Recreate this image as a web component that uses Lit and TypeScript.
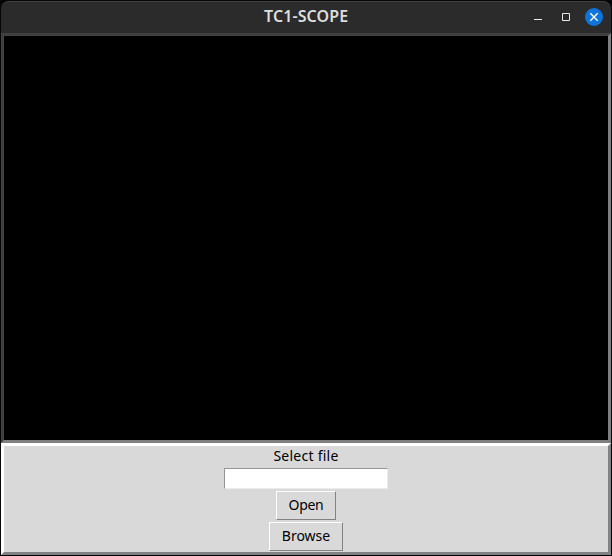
import { LitElement, html, css } from "lit";
import { customElement } from "lit/decorators.js";

@customElement("title-bar")
class TitleBar extends LitElement {
  static styles = css`
    :host {
      display: grid;
      grid-template-columns: 1fr auto 1fr;
      align-items: center;
      height: 32px;
      box-sizing: border-box;
      padding-bottom: 1px;
      border-top: 1px solid #404040;
      border-radius: 8px 8px 0 0;
      background: #2b2b2b;
      color: #dedede;
    }
    .title {
      grid-column: 2;
      box-sizing: border-box;
      width: 84px;
      height: 30px;
      font: 600 16px/28px "Noto Sans", sans-serif;
      letter-spacing: 0.1px;
      white-space: nowrap;
    }
    .controls {
      display: flex;
      justify-content: flex-end;
      align-items: center;
      gap: 10px;
      padding-right: 8px;
    }
    svg {
      display: block;
      width: 18px;
      height: 18px;
    }
  `;

  render() {
    return html`
      <div class="title">TC1-SCOPE</div>
      <div class="controls">
        <svg viewBox="0 0 18 18"><path d="M5 11.5h8" stroke="#e8e8e8" /></svg>
        <svg viewBox="0 0 18 18"><path d="M5.5 5.5h7v7h-7z" fill="none" stroke="#e8e8e8" /></svg>
        <svg viewBox="0 0 18 18">
          <circle cx="9" cy="9" r="9" fill="#0f73dc" />
          <path d="M5.3 5.3l7.4 7.4M12.7 5.3l-7.4 7.4" stroke="#fff" stroke-width="1.4" />
        </svg>
      </div>
    `;
  }
}

@customElement("app-root")
class AppRoot extends LitElement {
  static styles = css`
    :host {
      display: flex;
      flex-direction: column;
      box-sizing: border-box;
      width: 612px;
      height: 556px;
      padding: 1px;
      background: #050608;
      font: 14px/19px "Noto Sans", sans-serif;
      color: #000;
    }
    .scope {
      flex: 1;
      border: 3px solid;
      border-color: #404040 #7f7f7f #7f7f7f #404040;
      background: #000;
    }
    .panel {
      display: flex;
      flex-direction: column;
      align-items: center;
      box-sizing: border-box;
      height: 112px;
      border: 3px solid;
      border-color: #fff #828282 #828282 #fff;
      background: #d9d9d9;
    }
    .label {
      height: 22px;
      letter-spacing: 0.25px;
    }
    .entry {
      box-sizing: border-box;
      width: 164px;
      height: 21px;
      padding: 0 2px;
      border: 1px solid;
      border-color: #959595 #ececec #ececec #959595;
      border-radius: 0;
      outline: none;
      background: #fff;
      font: inherit;
    }
    .button {
      box-sizing: border-box;
      height: 29px;
      margin-top: 2px;
      padding: 0 0 2px;
      border: 1px solid;
      border-color: #fff #828282 #828282 #fff;
      border-radius: 0;
      background: #d9d9d9;
      color: #000;
      font: inherit;
    }
    .open {
      width: 60px;
      letter-spacing: -0.3px;
    }
    .browse {
      width: 74px;
    }
  `;

  render() {
    return html`
      <title-bar></title-bar>
      <div class="scope"></div>
      <div class="panel">
        <div class="label">Select file</div>
        <input class="entry" type="text" aria-label="Select file" />
        <button class="button open">Open</button>
        <button class="button browse">Browse</button>
      </div>
    `;
  }
}
